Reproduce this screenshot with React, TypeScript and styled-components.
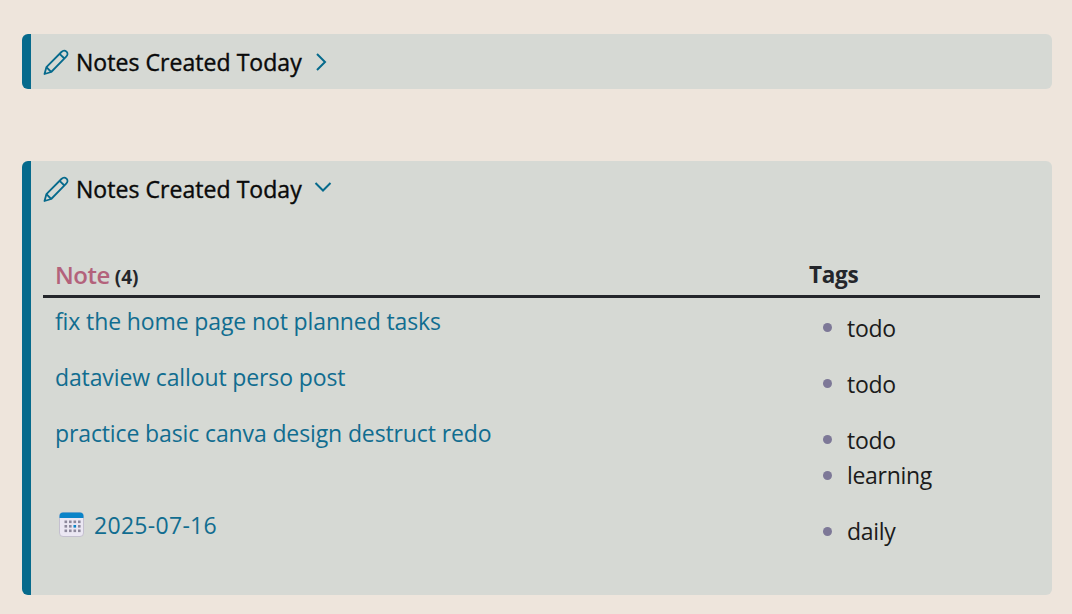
import { createGlobalStyle, styled } from "styled-components";

const GlobalStyle = createGlobalStyle`
  html, body {
    margin: 0;
    background: #eee5dc;
    font-family: "Open Sans", "Noto Sans", sans-serif;
  }
`

const Page = styled.main`
  width: 1030px;
  padding: 34px 20px 0 22px;
  display: flex;
  flex-direction: column;
  gap: 72px;
`

const Callout = styled.section`
  background: #d6d9d4;
  border-left: 9px solid #066a8c;
  border-radius: 6px;
  padding: 0 12px;
`

const CalloutTitle = styled.div`
  display: flex;
  align-items: center;
  height: 55px;
  color: #0a0a0a;
  font-size: 23px;
  font-weight: 400;
  letter-spacing: 0.05px;
  -webkit-text-stroke: 0.4px #0a0a0a;
`

const TitleText = styled.span`
  margin-left: 7px;
`

const Fold = styled.span<{ $open?: boolean }>`
  display: flex;
  margin-left: ${(p) => (p.$open ? "11px" : "12px")};
  color: #066a8c;
`

const Table = styled.div`
  display: grid;
  grid-template-columns: 754px 1fr;
  margin-top: 40px;
  padding-bottom: 37px;
`

const HeadCell = styled.div`
  display: flex;
  align-items: baseline;
  gap: 5px;
  height: 42px;
  padding: 0 12px;
  box-sizing: border-box;
  border-bottom: 3px solid #24262b;
  line-height: 38px;
  color: #24262b;
  font-size: 22.5px;
  font-weight: 700;
  letter-spacing: -0.3px;
`

const NoteHead = styled.span`
  color: #b3627b;
  font-size: 24px;
  font-weight: 600;
  letter-spacing: -0.5px;
`

const Count = styled.span`
  font-size: 19px;
  letter-spacing: 0;
`

const NoteCell = styled.div<{ $date?: boolean }>`
  display: flex;
  align-items: flex-start;
  gap: 9px;
  padding: 6px 12px 0;
  color: #116d90;
  font-size: 23px;
  line-height: 34px;
  letter-spacing: ${(p) => (p.$date ? "0.3px" : "-0.12px")};
`

const TagList = styled.ul`
  list-style: none;
  margin: 0;
  padding: 12px 0 8.5px 26px;
`

const Tag = styled.li`
  display: flex;
  align-items: center;
  gap: 15px;
  height: 35.5px;
  color: #1b1b1b;
  font-size: 23px;
  letter-spacing: -0.3px;

  &::before {
    content: "";
    width: 9px;
    height: 9px;
    border-radius: 50%;
    background: #7d7897;
  }
`

const RowGroup = styled.div`
  display: contents;
`

const CalendarBox = styled.svg`
  margin: 4px 1px 0 4px;
  flex: none;
`

const PencilIcon = () => (
  <svg width="26" height="26" viewBox="0 0 26 26" fill="none" stroke="#066a8c" strokeWidth="1.8" strokeLinejoin="round">
    <path d="M1.5 25 L3.4 18.2 L18.4 3 C19.9 1.5 22 1.3 23.5 2.7 C25 4.2 24.7 6.2 23.2 7.7 L8.2 23 Z" />
    <path d="M16.6 4.8 L21.4 9.5" />
    <path d="M3.4 18.2 L8.2 23" />
  </svg>
)

const ChevronRight = () => (
  <svg width="14" height="20" viewBox="0 0 14 20" fill="none" stroke="currentColor" strokeWidth="2">
    <path d="M3 2 L11 10 L3 18" />
  </svg>
)

const ChevronDown = () => (
  <svg width="20" height="14" viewBox="0 0 20 14" fill="none" stroke="currentColor" strokeWidth="2">
    <path d="M2.5 1 L10 8.5 L17.5 1" />
  </svg>
)

const CalendarIcon = () => (
  <CalendarBox width="25" height="25" viewBox="0 0 25 25">
    <rect x="0.5" y="0.5" width="24" height="24" rx="3.5" fill="#ebe7f3" stroke="#bcb8c9" strokeWidth="0.8" />
    <path d="M0.5 6 V4 A3.5 3.5 0 0 1 4 0.5 H21 A3.5 3.5 0 0 1 24.5 4 V6 Z" fill="#0a84c8" />
    {[8.5, 13, 17.5].map((y) =>
      [5.5, 10, 14.5, 19].map((x) => (
        <rect key={`${x}-${y}`} x={x} y={y} width="2.6" height="2.6" fill={x === 14.5 && y === 13 ? "#0a84c8" : "#8d899c"} />
      )),
    )}
  </CalendarBox>
)

const rows = [
  { note: "fix the home page not planned tasks", tags: ["todo"] },
  { note: "dataview callout perso post", tags: ["todo"] },
  { note: "practice basic canva design destruct redo", tags: ["todo", "learning"] },
  { note: "2025-07-16", tags: ["daily"], icon: true },
]

export default function App() {
  return (
    <>
      <GlobalStyle />
      <Page>
        <Callout>
          <CalloutTitle>
            <PencilIcon />
            <TitleText>Notes Created Today</TitleText>
            <Fold><ChevronRight /></Fold>
          </CalloutTitle>
        </Callout>
        <Callout>
          <CalloutTitle>
            <PencilIcon />
            <TitleText>Notes Created Today</TitleText>
            <Fold $open><ChevronDown /></Fold>
          </CalloutTitle>
          <Table>
            <HeadCell>
              <NoteHead>Note</NoteHead>
              <Count>(4)</Count>
            </HeadCell>
            <HeadCell>Tags</HeadCell>
            {rows.map((row) => (
              <RowGroup key={row.note}>
                <NoteCell $date={row.icon}>
                  {row.icon && <CalendarIcon />}
                  {row.note}
                </NoteCell>
                <TagList>
                  {row.tags.map((tag) => (
                    <Tag key={tag}>{tag}</Tag>
                  ))}
                </TagList>
              </RowGroup>
            ))}
          </Table>
        </Callout>
      </Page>
    </>
  )
}
